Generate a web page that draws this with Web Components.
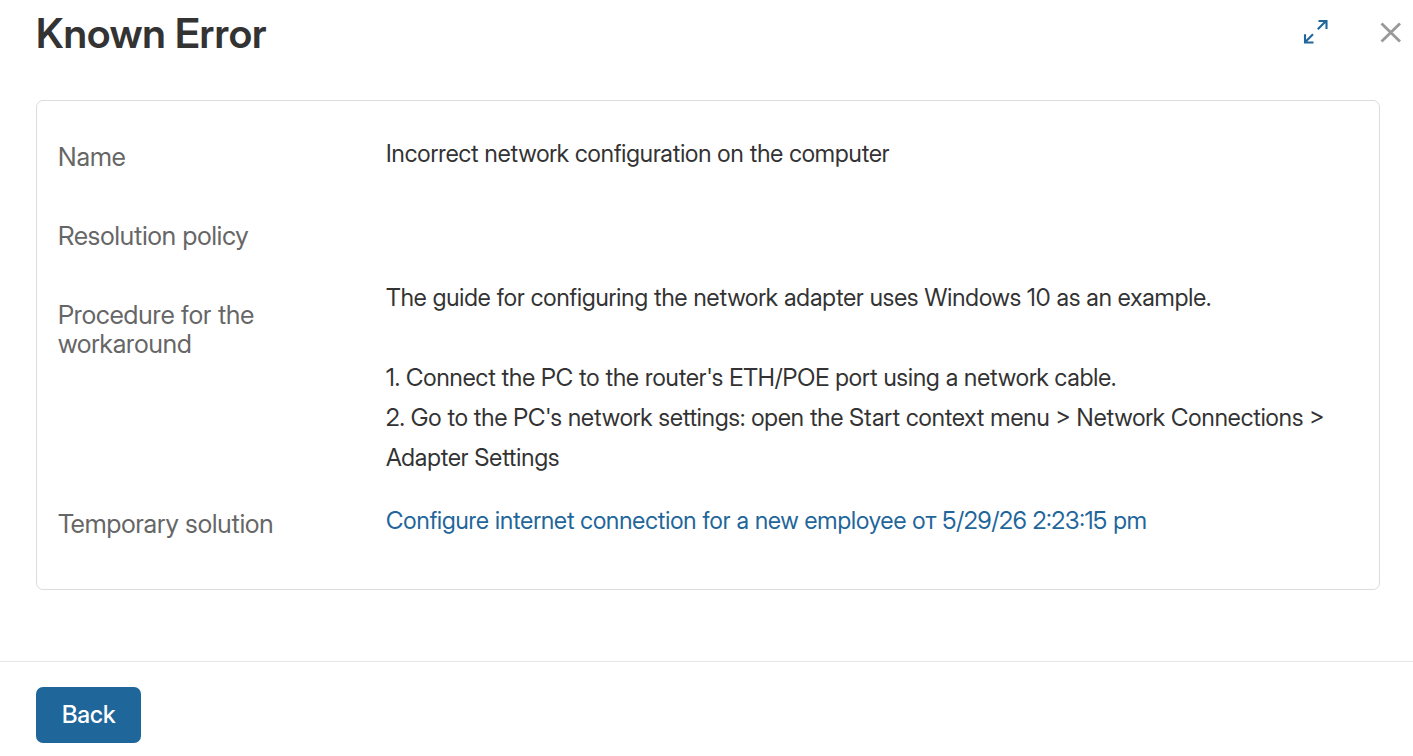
<!DOCTYPE html>
<html lang="en">
<head>
  <meta charset="utf-8">
  <meta name="viewport" content="width=device-width, initial-scale=1">
  <title>Known Error</title>
  <style>
    body {
      margin: 0;
      background-color: #fff;
      color: #333;
      font-family: "Inter Display", Inter, "Liberation Sans", sans-serif;
      font-size: 24px;
      --accent: #1f669b;
      --border: #dcdcdc;
    }
  </style>
</head>
<body>
  <modal-window>
    <span slot="title">Known Error</span>
    <form-card>
      <form-field label="Name">Incorrect network configuration on the computer</form-field>
      <form-field label="Resolution policy"></form-field>
      <form-field label="Procedure for the workaround" multiline>The guide for configuring the network adapter uses Windows 10 as an example.

1. Connect the PC to the router's ETH/POE port using a network cable.
2. Go to the PC's network settings: open the Start context menu &gt; Network Connections &gt; Adapter Settings</form-field>
      <form-field label="Temporary solution"><app-link href="#">Configure internet connection for a new employee от 5/29/26 2:23:15 pm</app-link></form-field>
    </form-card>
    <app-button slot="footer">Back</app-button>
  </modal-window>

  <script>
    class ModalWindow extends HTMLElement {
      connectedCallback() {
        const shadowRoot = this.attachShadow({ mode: 'open' });

        shadowRoot.innerHTML = `
          <style>
            :host {
              display: block;
            }
            header {
              display: flex;
              align-items: center;
              justify-content: space-between;
              padding: 0 8px 0 36px;
            }
            h1 {
              margin: 0;
              font-size: 41px;
              font-weight: 600;
              line-height: 66px;
            }
            .actions {
              display: flex;
              gap: 48px;
            }
            .actions button {
              display: flex;
              padding: 0;
              border: 0;
              background: none;
              color: var(--accent);
              cursor: pointer;
            }
            .actions .close {
              color: #999;
            }
            main {
              padding: 34px 33px 71px 36px;
            }
            footer {
              display: flex;
              padding: 25px 36px 13px;
              border-top: 1px solid #e5e5e5;
            }
          </style>
          <header>
            <h1><slot name="title"></slot></h1>
            <div class="actions">
              <button type="button" aria-label="Expand">
                <svg width="28" height="28" viewBox="0 0 28 28" fill="none" stroke="currentColor" stroke-width="2.1">
                  <path d="M16.8 10.2L25 2M17.5 2H25.5V10M12 15.2L4 23.2M4 15.2V23.5H12.5"/>
                </svg>
              </button>
              <button type="button" class="close" aria-label="Close">
                <svg width="28" height="28" viewBox="0 0 28 28" fill="none" stroke="currentColor" stroke-width="2.8">
                  <path d="M4.5 4.5l18.5 18M23 4.5L4.5 22.5"/>
                </svg>
              </button>
            </div>
          </header>
          <main><slot></slot></main>
          <footer><slot name="footer"></slot></footer>
        `;
      }
    }

    class FormCard extends HTMLElement {
      connectedCallback() {
        const shadowRoot = this.attachShadow({ mode: 'open' });

        shadowRoot.innerHTML = `
          <style>
            :host {
              display: block;
              padding: 16px 21px 26px;
              border: 1px solid var(--border);
              border-radius: 7px;
            }
          </style>
          <slot></slot>
        `;
      }
    }

    class FormField extends HTMLElement {
      connectedCallback() {
        const shadowRoot = this.attachShadow({ mode: 'open' });

        shadowRoot.innerHTML = `
          <style>
            :host {
              display: grid;
              grid-template-columns: 328px 1fr;
            }
            .label {
              padding: 25px 80px 25px 0;
              color: #666;
              font-size: 26px;
              line-height: 29px;
            }
            .value {
              padding-top: 17px;
              line-height: 40px;
            }
            :host([multiline]) .value {
              padding: 3px 0 6px;
              white-space: pre-line;
            }
          </style>
          <div class="label"></div>
          <div class="value"><slot></slot></div>
        `;
        shadowRoot.querySelector('.label').textContent = this.getAttribute('label');
      }
    }

    class AppLink extends HTMLElement {
      connectedCallback() {
        const shadowRoot = this.attachShadow({ mode: 'open' });

        shadowRoot.innerHTML = `
          <style>
            :host {
              display: inline;
            }
            a {
              color: var(--accent);
              text-decoration: none;
            }
            a:hover {
              text-decoration: underline;
            }
          </style>
          <a><slot></slot></a>
        `;
        shadowRoot.querySelector('a').href = this.getAttribute('href');
      }
    }

    class AppButton extends HTMLElement {
      connectedCallback() {
        const shadowRoot = this.attachShadow({ mode: 'open' });

        shadowRoot.innerHTML = `
          <style>
            :host {
              display: inline-block;
            }
            button {
              display: block;
              padding: 8px 26px;
              border: 0;
              border-radius: 7px;
              background-color: var(--accent);
              color: #fff;
              font: inherit;
              font-weight: 500;
              line-height: 40px;
              cursor: pointer;
            }
          </style>
          <button type="button"><slot></slot></button>
        `;
      }
    }

    customElements.define('modal-window', ModalWindow);
    customElements.define('form-card', FormCard);
    customElements.define('form-field', FormField);
    customElements.define('app-link', AppLink);
    customElements.define('app-button', AppButton);
  </script>
</body>
</html>
